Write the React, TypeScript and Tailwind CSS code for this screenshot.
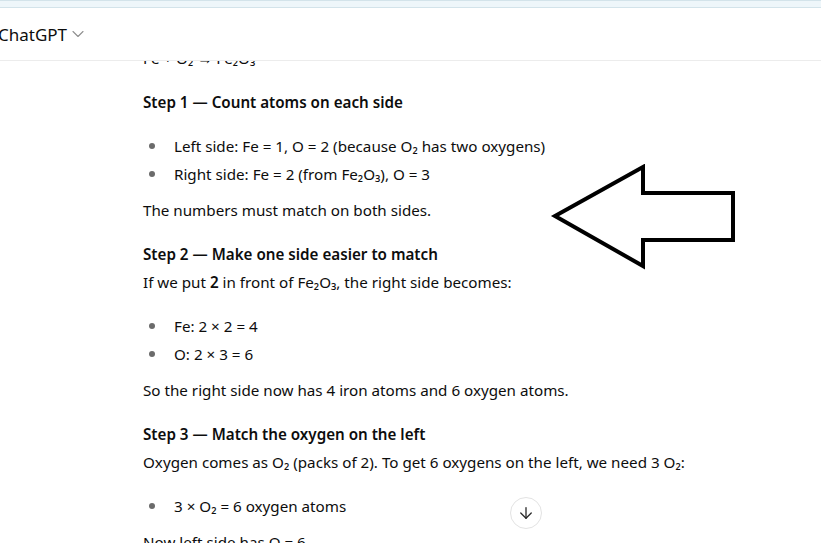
import { ArrowDown, ChevronDown } from 'lucide-react';

const font = { fontFamily: '"Noto Sans", "Open Sans", sans-serif' };

function Bullet({ children }: { children: React.ReactNode }) {
  return (
    <li className="flex items-center h-[28px]">
      <span className="w-[31px] flex justify-start pl-[6px]">
        <span className="w-[6px] h-[6px] rounded-full bg-[#6b6b6b]" />
      </span>
      <span>{children}</span>
    </li>
  );
}

export default function App() {
  return (
    <div
      className="relative w-[821px] h-[543px] overflow-hidden bg-white text-[#0d0d0d] flex flex-col"
      style={font}
    >
      <div className="h-[8px] shrink-0 bg-[#eef6fa] border-y border-[#d3e3ea]" />
      <header className="h-[53px] shrink-0 flex items-center border-b border-[#ececec] bg-white z-10">
        <span className="text-[17px] ml-[-2px] leading-none">ChatGPT</span>
        <ChevronDown className="w-[20px] h-[20px] ml-[1px] text-[#8f8f8f]" strokeWidth={1.3} />
      </header>

      <main className="flex-1 overflow-hidden">
        <div className="mt-[-17px] pl-[143px] text-[15.2px] leading-[28px]">
          <p>Fe + O₂ → Fe₂O₃</p>

          <p className="mt-[16px] font-semibold">Step 1 — Count atoms on each side</p>
          <ul className="mt-[16px]">
            <Bullet>Left side: Fe = 1, O = 2 (because O₂ has two oxygens)</Bullet>
            <Bullet>Right side: Fe = 2 (from Fe₂O₃), O = 3</Bullet>
          </ul>
          <p className="mt-[8px]">The numbers must match on both sides.</p>

          <p className="mt-[16px] font-semibold">Step 2 — Make one side easier to match</p>
          <p>
            If we put <b className="font-semibold">2</b> in front of Fe₂O₃, the right side becomes:
          </p>
          <ul className="mt-[16px]">
            <Bullet>Fe: 2 × 2 = 4</Bullet>
            <Bullet>O: 2 × 3 = 6</Bullet>
          </ul>
          <p className="mt-[8px]">So the right side now has 4 iron atoms and 6 oxygen atoms.</p>

          <p className="mt-[16px] font-semibold">Step 3 — Match the oxygen on the left</p>
          <p>Oxygen comes as O₂ (packs of 2). To get 6 oxygens on the left, we need 3 O₂:</p>
          <ul className="mt-[16px]">
            <Bullet>3 × O₂ = 6 oxygen atoms</Bullet>
          </ul>
          <p className="mt-[8px]">Now left side has O = 6</p>
        </div>
      </main>

      <svg
        className="absolute left-[550px] top-[164px]"
        width="188"
        height="108"
        viewBox="550 164 188 108"
      >
        <polygon
          points="555,216 643,167 643,193 733,193 733,240 643,240 643,266"
          fill="none"
          stroke="#000"
          strokeWidth="4"
          strokeLinejoin="miter"
        />
      </svg>

      <button className="absolute left-[510px] top-[497px] w-[32px] h-[32px] rounded-full border border-[#e3e3e3] bg-white flex items-center justify-center">
        <ArrowDown className="w-[18px] h-[18px] text-[#2a2a2a]" strokeWidth={1.75} />
      </button>
    </div>
  );
}
